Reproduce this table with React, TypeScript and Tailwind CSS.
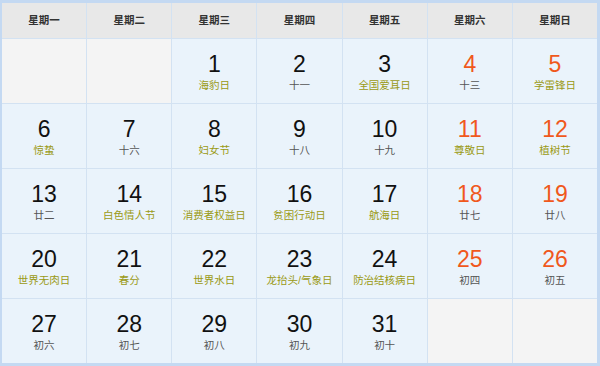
type Day = {
  n: number;
  sub: string;
  fest?: boolean;
  weekend?: boolean;
} | null;

const weeks = ['星期一', '星期二', '星期三', '星期四', '星期五', '星期六', '星期日'];

const days: Day[] = [
  null,
  null,
  { n: 1, sub: '海豹日', fest: true },
  { n: 2, sub: '十一' },
  { n: 3, sub: '全国爱耳日', fest: true },
  { n: 4, sub: '十三', weekend: true },
  { n: 5, sub: '学雷锋日', fest: true, weekend: true },
  { n: 6, sub: '惊蛰', fest: true },
  { n: 7, sub: '十六' },
  { n: 8, sub: '妇女节', fest: true },
  { n: 9, sub: '十八' },
  { n: 10, sub: '十九' },
  { n: 11, sub: '尊敬日', fest: true, weekend: true },
  { n: 12, sub: '植树节', fest: true, weekend: true },
  { n: 13, sub: '廿二' },
  { n: 14, sub: '白色情人节', fest: true },
  { n: 15, sub: '消费者权益日', fest: true },
  { n: 16, sub: '贫困行动日', fest: true },
  { n: 17, sub: '航海日', fest: true },
  { n: 18, sub: '廿七', weekend: true },
  { n: 19, sub: '廿八', weekend: true },
  { n: 20, sub: '世界无肉日', fest: true },
  { n: 21, sub: '春分', fest: true },
  { n: 22, sub: '世界水日', fest: true },
  { n: 23, sub: '龙抬头/气象日', fest: true },
  { n: 24, sub: '防治结核病日', fest: true },
  { n: 25, sub: '初四', weekend: true },
  { n: 26, sub: '初五', weekend: true },
  { n: 27, sub: '初六' },
  { n: 28, sub: '初七' },
  { n: 29, sub: '初八' },
  { n: 30, sub: '初九' },
  { n: 31, sub: '初十' },
  null,
  null,
];

function DayCell({ day }: { day: Day }) {
  if (!day) return <div className="h-[64px] bg-[#f4f4f4]"></div>;
  return (
    <div className="h-[64px] bg-[#eaf3fb] flex flex-col items-center pt-[12px]">
      <span
        className={
          day.weekend
            ? 'text-[23px] leading-[26px] text-[#f0581c]'
            : 'text-[23px] leading-[26px] text-[#111]'
        }
      >
        {day.n}
      </span>
      <span
        className={
          day.fest
            ? 'mt-[1px] text-[10.5px] leading-[14px] text-[#9a9a14] whitespace-nowrap'
            : 'mt-[1px] text-[10.5px] leading-[14px] text-[#555] whitespace-nowrap'
        }
      >
        {day.sub}
      </span>
    </div>
  );
}

export default function App() {
  return (
    <div className="w-[600px] h-[366px] bg-white font-['Liberation_Sans','Noto_Sans_CJK_SC',sans-serif]">
      <div className="w-[600px] h-[366px] border-l-2 border-r-[3px] border-t-[3px] border-b-[3px] border-[#c4d9f2] bg-[#d3e2f2]">
        <div className="grid grid-cols-7 gap-x-px">
          {weeks.map((w) => (
            <div
              key={w}
              className="h-[35px] bg-[#e8e8e8] flex items-center justify-center text-[10.5px] font-bold text-[#333]"
            >
              {w}
            </div>
          ))}
        </div>
        <div className="grid grid-cols-7 gap-px mt-px">
          {days.map((d, i) => (
            <DayCell key={i} day={d} />
          ))}
        </div>
      </div>
    </div>
  );
}
